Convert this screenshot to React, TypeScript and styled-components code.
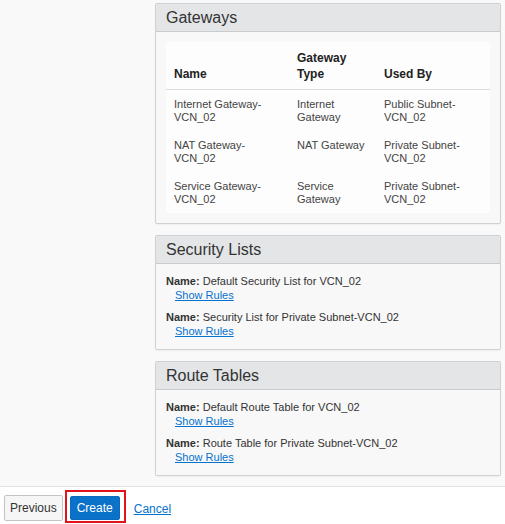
import React from "react";
import styled, { createGlobalStyle } from "styled-components";

const Global = createGlobalStyle`
  html, body { margin: 0; padding: 0; }
  body {
    font-family: "Liberation Sans", Arial, sans-serif;
    color: #333;
    background: #fff;
  }
`;

const Page = styled.div`
  width: 505px;
  height: 524px;
  overflow: hidden;
  display: flex;
  flex-direction: column;
`;

const Main = styled.div`
  background: #f9f9f9;
  padding: 3px 4px 10px 155px;
  display: flex;
  flex-direction: column;
  gap: 11px;
`;

const Panel = styled.section`
  border: 1px solid #cfd1d3;
  border-radius: 2px;
  background: #f8f8f8;
  box-shadow: 0 1px 1px rgba(0, 0, 0, 0.04);
`;

const PanelHeader = styled.h2`
  margin: 0;
  height: 27px;
  line-height: 27px;
  padding: 0 10px;
  font-size: 16px;
  font-weight: normal;
  color: #333;
  background: #e3e5e7;
  border-bottom: 1px solid #c9cbcd;
`;

const PanelBody = styled.div<{ $pad: string }>`
  padding: ${(p) => p.$pad};
`;

const TableBox = styled.div`
  background: #fdfdfd;
  border-radius: 2px;
`;

const Table = styled.table`
  width: 100%;
  border-collapse: collapse;
  table-layout: fixed;
`;

const Th = styled.th`
  text-align: left;
  vertical-align: bottom;
  font-size: 12px;
  font-weight: bold;
  line-height: 16px;
  color: #222;
  padding: 8px 8px 7px 8px;
  border-bottom: 1px solid #dcdcdc;
`;

const Td = styled.td`
  vertical-align: top;
  font-size: 11px;
  line-height: 13px;
  color: #444;
  padding: 8px 8px 7px 8px;
`;

const Item = styled.div`
  font-size: 11px;
  line-height: 14px;
  color: #333;
  & + & {
    margin-top: 8px;
  }
`;

const Label = styled.span`
  font-weight: bold;
`;

const RuleLink = styled.a`
  display: block;
  margin-left: 9px;
  color: #0572ce;
  text-decoration: underline;
  cursor: pointer;
`;

const Footer = styled.div`
  flex: 1;
  border-top: 1px solid #e2e2e2;
  background: #fff;
  display: flex;
  align-items: flex-start;
  padding: 3px 0 0 4px;
`;

const Button = styled.button<{ $primary?: boolean }>`
  font-family: "Liberation Sans", Arial, sans-serif;
  font-size: 12px;
  height: ${(p) => (p.$primary ? "24px" : "26px")};
  margin-top: ${(p) => (p.$primary ? "0" : "5px")};
  padding: 0 ${(p) => (p.$primary ? "6px" : "5px")};
  border-radius: 2px;
  cursor: pointer;
  border: 1px solid ${(p) => (p.$primary ? "#0a6bbf" : "#c4c4c4")};
  background: ${(p) => (p.$primary ? "#0b72c9" : "#f6f6f6")};
  color: ${(p) => (p.$primary ? "#fff" : "#333")};
`;

const Highlight = styled.div`
  margin-left: 2px;
  border: 2px solid #e0141a;
  padding: 4px 4px 1px 3px;
  display: flex;
`;

const CancelLink = styled.a`
  margin: 12px 0 0 8px;
  font-size: 12px;
  line-height: 14px;
  color: #0572ce;
  text-decoration: underline;
  cursor: pointer;
`;

const gateways = [
  ["Internet Gateway-\nVCN_02", "Internet\nGateway", "Public Subnet-\nVCN_02"],
  ["NAT Gateway-\nVCN_02", "NAT Gateway", "Private Subnet-\nVCN_02"],
  ["Service Gateway-\nVCN_02", "Service\nGateway", "Private Subnet-\nVCN_02"],
];

const Lines = ({ text }: { text: string }) => (
  <>
    {text.split("\n").map((l, i) => (
      <React.Fragment key={i}>
        {i > 0 && <br />}
        {l}
      </React.Fragment>
    ))}
  </>
);

const NamedList = ({ title, names }: { title: string; names: string[] }) => (
  <Panel>
    <PanelHeader>{title}</PanelHeader>
    <PanelBody $pad="10px 10px 11px 10px">
      {names.map((n) => (
        <Item key={n}>
          <Label>Name:</Label> {n}
          <RuleLink>Show Rules</RuleLink>
        </Item>
      ))}
    </PanelBody>
  </Panel>
);

export default function App() {
  return (
    <Page>
      <Global />
      <Main>
        <Panel>
          <PanelHeader>Gateways</PanelHeader>
          <PanelBody $pad="10px">
            <TableBox>
              <Table>
                <colgroup>
                  <col style={{ width: 123 }} />
                  <col style={{ width: 87 }} />
                  <col />
                </colgroup>
                <thead>
                  <tr>
                    <Th>Name</Th>
                    <Th>
                      Gateway
                      <br />
                      Type
                    </Th>
                    <Th>Used By</Th>
                  </tr>
                </thead>
                <tbody>
                  {gateways.map((row, i) => (
                    <tr key={i}>
                      {row.map((c, j) => (
                        <Td key={j}>
                          <Lines text={c} />
                        </Td>
                      ))}
                    </tr>
                  ))}
                </tbody>
              </Table>
            </TableBox>
          </PanelBody>
        </Panel>
        <NamedList
          title="Security Lists"
          names={["Default Security List for VCN_02", "Security List for Private Subnet-VCN_02"]}
        />
        <NamedList
          title="Route Tables"
          names={["Default Route Table for VCN_02", "Route Table for Private Subnet-VCN_02"]}
        />
      </Main>
      <Footer>
        <Button>Previous</Button>
        <Highlight>
          <Button $primary>Create</Button>
        </Highlight>
        <CancelLink>Cancel</CancelLink>
      </Footer>
    </Page>
  );
}
